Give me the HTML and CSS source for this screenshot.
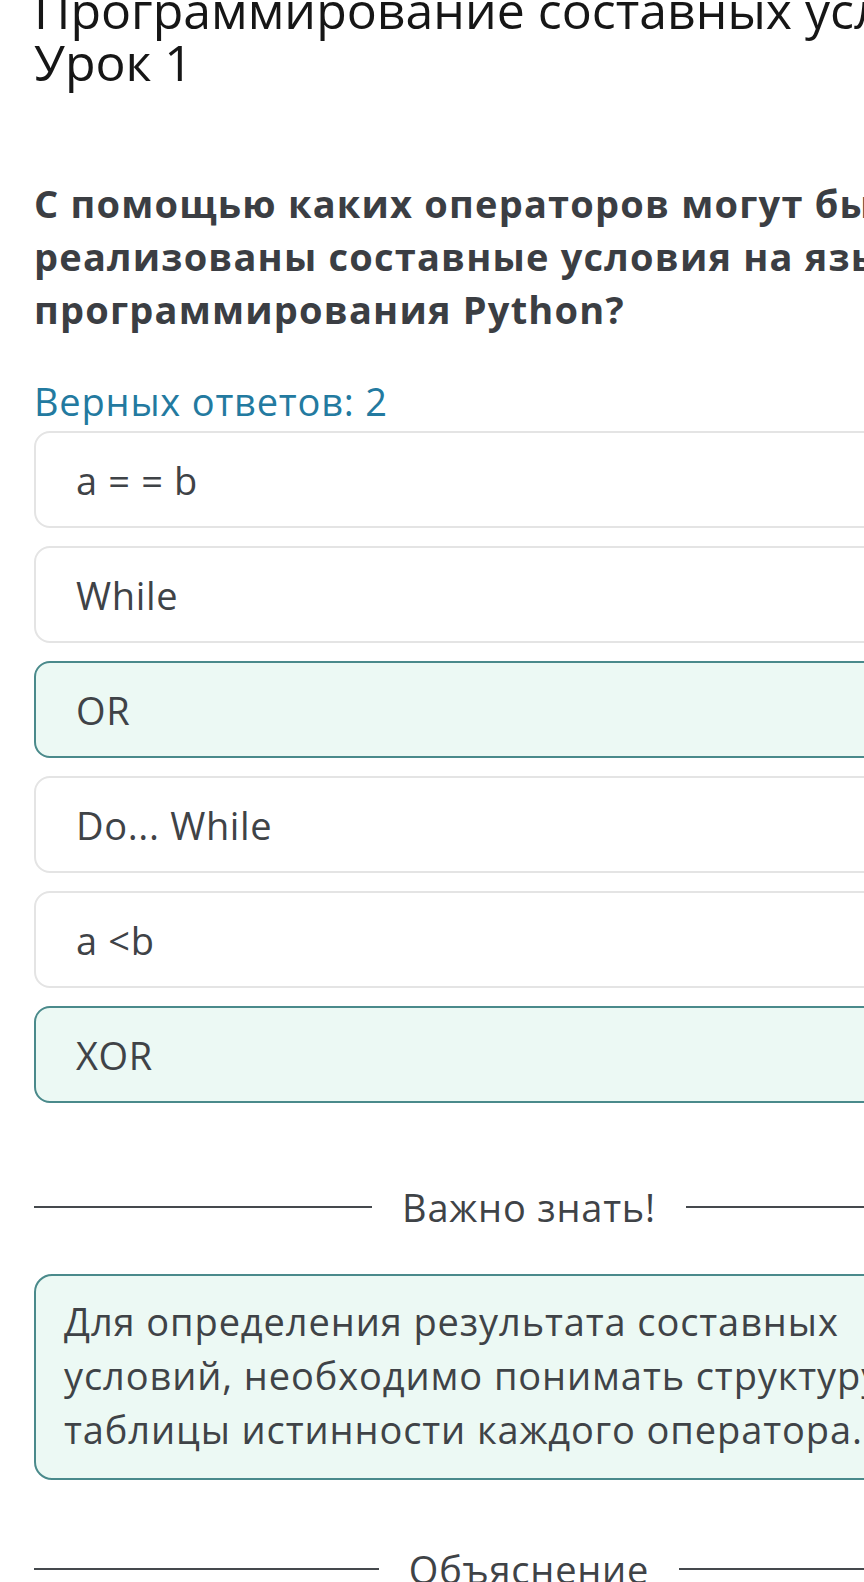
FILE: index.html
```html
<!DOCTYPE html>
<html lang="ru">
<head>
<meta charset="utf-8">
<title>Урок 1</title>
<link rel="stylesheet" href="styles.css">
</head>
<body>
<div class="page">
  <h1 class="title">Программирование составных условий. Урок 1</h1>
  <p class="question">С помощью каких операторов могут быть реализованы составные условия на языке программирования Python?</p>
  <p class="hint">Верных ответов: 2</p>
  <div class="options">
    <div class="option">a = = b</div>
    <div class="option">While</div>
    <div class="option selected">OR</div>
    <div class="option">Do... While</div>
    <div class="option">a &lt;b</div>
    <div class="option selected">XOR</div>
  </div>
  <div class="divider first"><span class="line"></span><span class="label">Важно знать!</span><span class="line"></span></div>
  <div class="info">Для определения результата составных условий, необходимо понимать структуру таблицы истинности каждого оператора.</div>
  <div class="divider second"><span class="line"></span><span class="label">Объяснение</span><span class="line"></span></div>
</div>
</body>
</html>
```
FILE: styles.css
```css
html, body {
  margin: 0;
  padding: 0;
  background: #ffffff;
  overflow: hidden;
}
body {
  font-family: "Open Sans", "Noto Sans", sans-serif;
  color: #3f4347;
}
.page {
  width: 990px;
  padding-left: 34px;
}
.title {
  margin: -16px 0 0 0;
  font-size: 50px;
  line-height: 52px;
  font-weight: 400;
  color: #161616;
}
.question {
  margin: 89px 0 0 0;
  font-size: 38px;
  line-height: 53px;
  letter-spacing: 1.2px;
  font-weight: 700;
  color: #3b3e43;
}
.hint {
  margin: 41px 0 0 0;
  font-size: 38px;
  line-height: 48px;
  letter-spacing: 0.8px;
  color: #237aa0;
}
.options {
  margin-top: 6px;
  display: flex;
  flex-direction: column;
  gap: 18px;
}
.option {
  box-sizing: border-box;
  height: 97px;
  display: flex;
  align-items: center;
  padding: 0 40px;
  border: 2px solid #e4e4e4;
  border-radius: 16px;
  background: #ffffff;
  font-size: 38px;
  line-height: 48px;
  letter-spacing: 0.65px;
  color: #3f4347;
}
.option.selected {
  border-color: #4a8a8b;
  background: #ecf9f4;
}
.divider {
  display: flex;
  align-items: center;
  font-size: 38px;
  line-height: 48px;
  letter-spacing: 0.8px;
  color: #3f4347;
}
.divider.first {
  margin-top: 80px;
}
.divider.second {
  margin-top: 65px;
}
.divider .line {
  flex: 1;
  height: 2px;
  background: #45494d;
}
.divider .label {
  margin: 0 30px;
  white-space: nowrap;
}
.info {
  margin-top: 43px;
  border: 2px solid #4a8a8b;
  border-radius: 18px;
  background: #ecf9f4;
  padding: 18px 60px 22px 28px;
  font-size: 38px;
  line-height: 54px;
  letter-spacing: 0.9px;
  color: #3f4347;
}
```
